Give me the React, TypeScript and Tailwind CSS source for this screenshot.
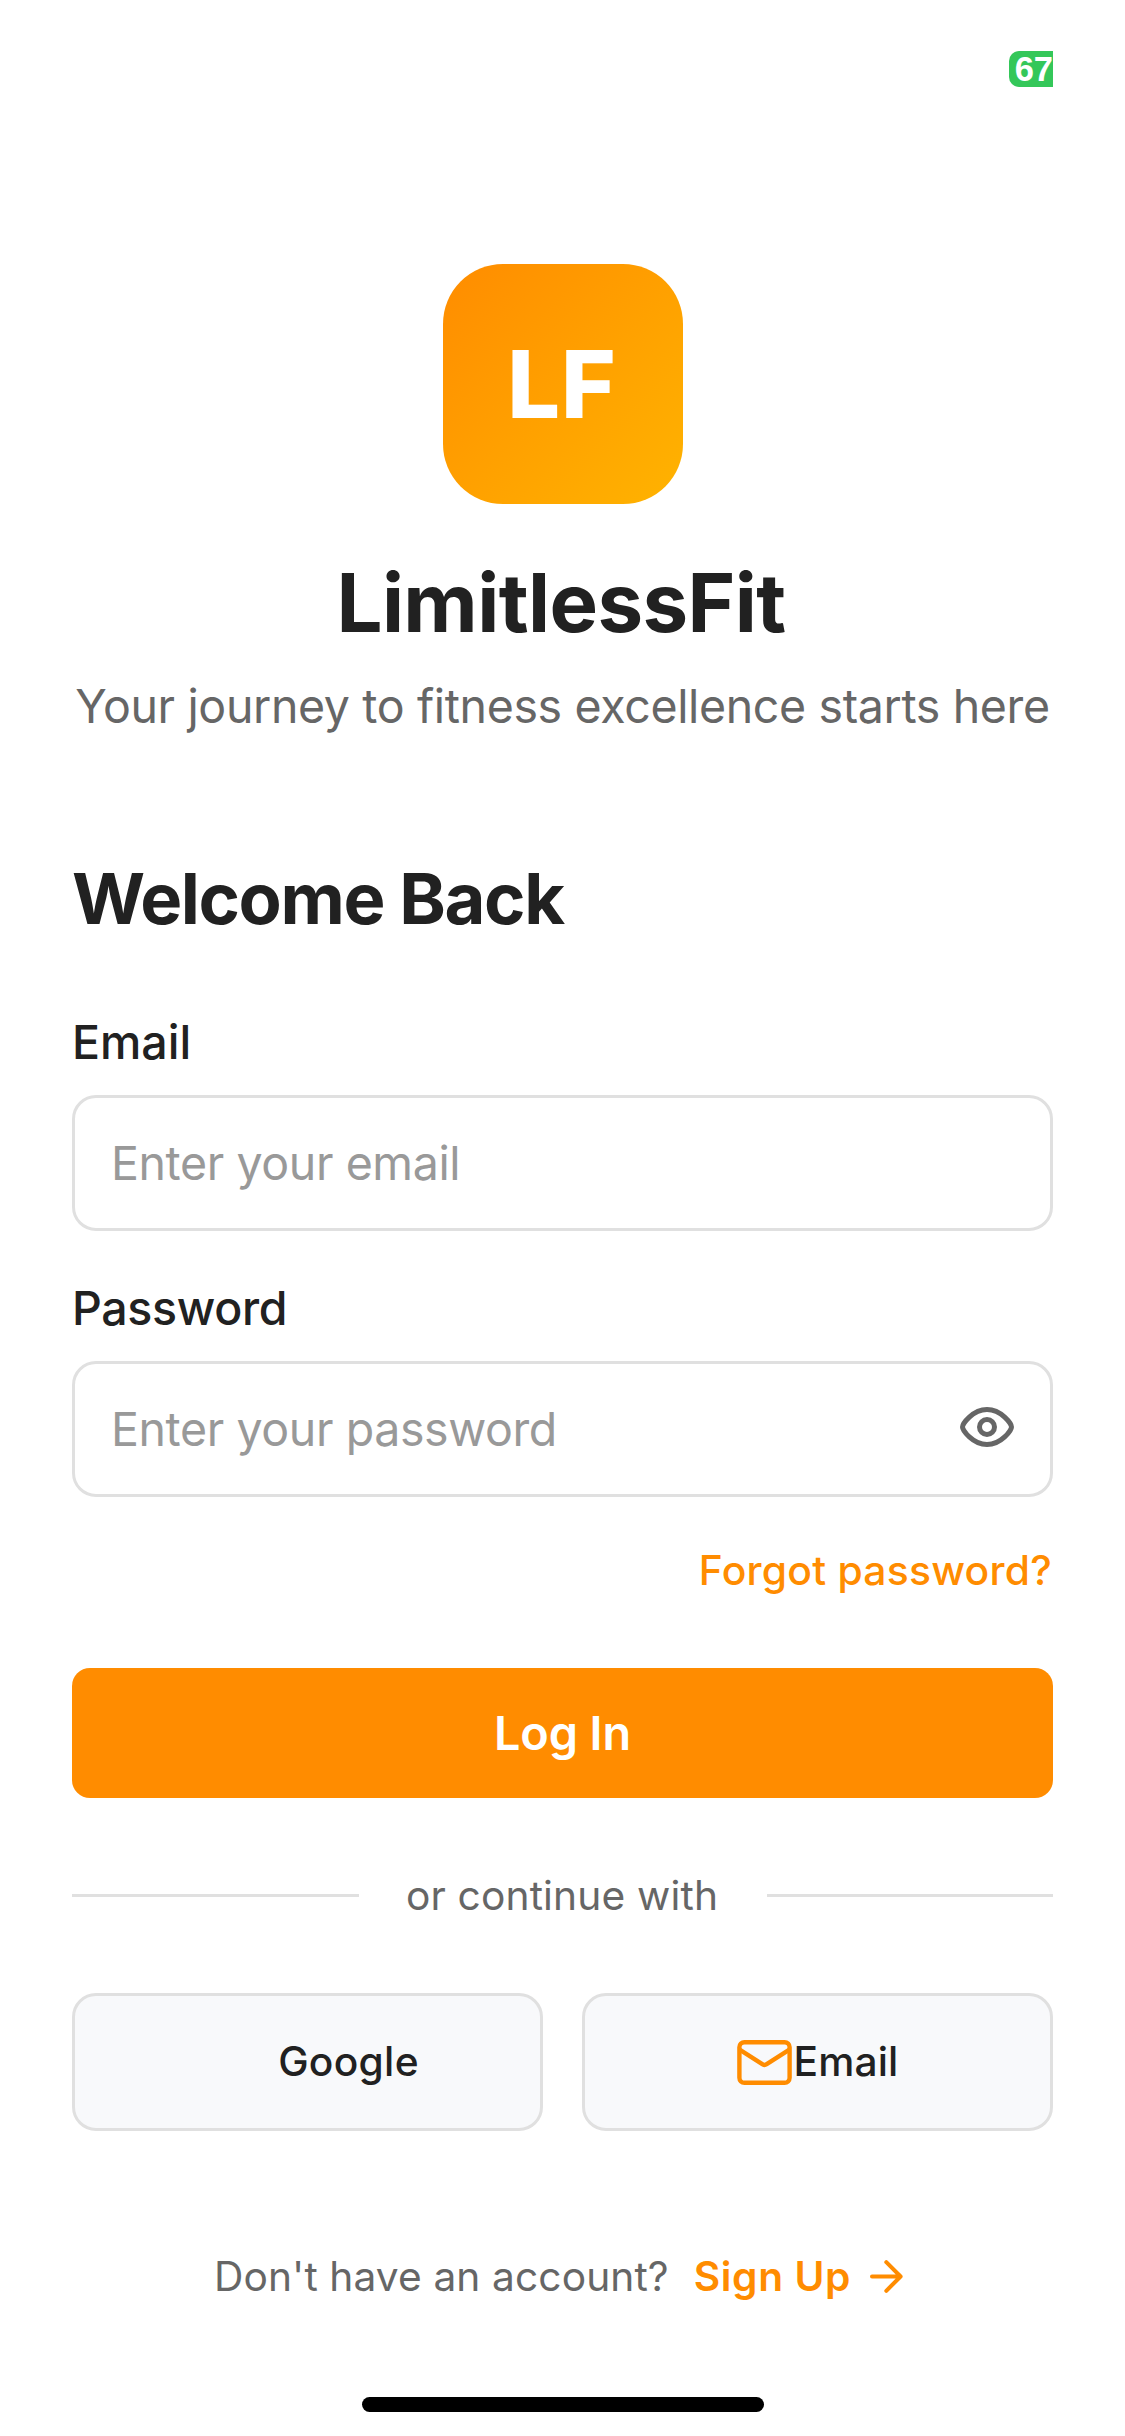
import React from 'react';

function EyeIcon() {
  return (
    <svg width="54" height="40" viewBox="0 0 54 40" fill="none" stroke="#666666" strokeWidth="5">
      <path d="M2.5 20C2.5 17 12.5 2.5 27 2.5S51.5 17 51.5 20S41.5 37.5 27 37.5S2.5 23 2.5 20Z" strokeLinejoin="round" />
      <circle cx="27" cy="20" r="7.5" />
    </svg>
  );
}

function MailIcon() {
  return (
    <svg width="55" height="45" viewBox="0 0 55 45" fill="none" stroke="#ff8c00" strokeWidth="4.4" strokeLinejoin="round">
      <rect x="2.4" y="2.2" width="50.2" height="40.6" rx="5" />
      <path d="M2.6 9.6L25.3 24.2Q27.5 25.6 29.7 24.2L52.4 9.6" />
    </svg>
  );
}

function ArrowIcon() {
  return (
    <svg width="33" height="33" viewBox="0 0 33 33" fill="none" stroke="#ff8c00" strokeWidth="4" strokeLinecap="round" strokeLinejoin="round">
      <path d="M2 16.5H30.6M16.3 2.2L30.6 16.5L16.3 30.8" />
    </svg>
  );
}

const field =
  'h-[136px] w-full rounded-3xl border-3 border-[#e0e0e0] bg-white pl-9 text-[46.5px] tracking-[-0.4px] outline-none placeholder:text-[#999999]';
const social =
  'flex h-[138px] w-[471px] items-center justify-center rounded-3xl border-3 border-[#e0e0e0] bg-[#f8f9fb] text-[40.7px] font-medium';

export default function App() {
  return (
    <main className="flex h-[2436px] w-[1125px] flex-col overflow-hidden bg-white px-[72px] font-[Inter,sans-serif] text-[#212121]">
      <div className="flex h-[264px] justify-end pt-[51px]">
        <div className="flex h-9 w-11 items-center justify-end rounded-l-[10px] bg-[#34c759] font-['Liberation_Sans',sans-serif] text-[34.5px] leading-9 font-bold text-white">67</div>
      </div>

      <div className="flex h-60 w-60 items-center justify-center self-center rounded-[60px] bg-linear-to-br from-[#ff8c00] to-[#ffb300] text-[93.5px] font-extrabold text-white">
        <span className="mr-px tracking-[1px]">LF</span>
      </div>
      <h1 className="mt-[49px] pr-[3px] text-center text-[81.5px] leading-[100px] font-bold tracking-[-0.6px]">LimitlessFit</h1>
      <p className="mt-[23px] text-center text-[46.5px] leading-[60px] tracking-[-0.36px] whitespace-nowrap text-[#666666]">
        Your journey to fitness excellence starts here
      </p>

      <h2 className="mt-[119px] text-[70.5px] leading-[88px] font-bold tracking-[-1.4px]">Welcome Back</h2>

      <label className="mt-[69px] text-[46.5px] leading-[60px] font-medium">Email</label>
      <input className={field + ' mt-[23px]'} placeholder="Enter your email" />

      <label className="mt-[47px] text-[46.5px] leading-[60px] font-medium tracking-[-0.35px]">Password</label>
      <div className="relative mt-[23px]">
        <input className={field} placeholder="Enter your password" />
        <button className="absolute top-[46px] right-[39px]">
          <EyeIcon />
        </button>
      </div>

      <a className="mt-12 mr-px self-end text-[40.8px] leading-[50px] font-medium tracking-[0.25px] text-[#ff8c00]">Forgot password?</a>

      <button className="mt-[73px] h-[130px] w-full rounded-[18px] bg-[#ff8c00] text-[46.8px] font-semibold tracking-[-0.1px] text-white">
        Log In
      </button>

      <div className="mt-[72px] flex h-[51px] items-center justify-between">
        <div className="h-[3px] w-[287px] bg-[#e0e0e0]" />
        <span className="mr-[2px] text-[40.7px] tracking-[0.15px] text-[#666666]">or continue with</span>
        <div className="h-[3px] w-[286px] bg-[#e0e0e0]" />
      </div>

      <div className="mt-[72px] flex justify-between">
        <button className={social}>
          <span className="ml-[82px] tracking-[0.3px]">Google</span>
        </button>
        <button className={social}>
          <MailIcon />
          <span className="ml-[2px] tracking-[0.1px]">Email</span>
        </button>
      </div>

      <div className="mt-[120px] flex h-[51px] items-center pl-[142px] text-[40.7px]">
        <span className="tracking-[0.1px] text-[#666666]">Don't have an account?</span>
        <a className="ml-[25px] flex items-center font-semibold tracking-[0.6px] text-[#ff8c00]">
          Sign Up
          <span className="ml-[19px]">
            <ArrowIcon />
          </span>
        </a>
      </div>

      <div className="mt-[95px] h-[15px] w-[402px] shrink-0 self-center rounded-full bg-black" />
    </main>
  );
}
